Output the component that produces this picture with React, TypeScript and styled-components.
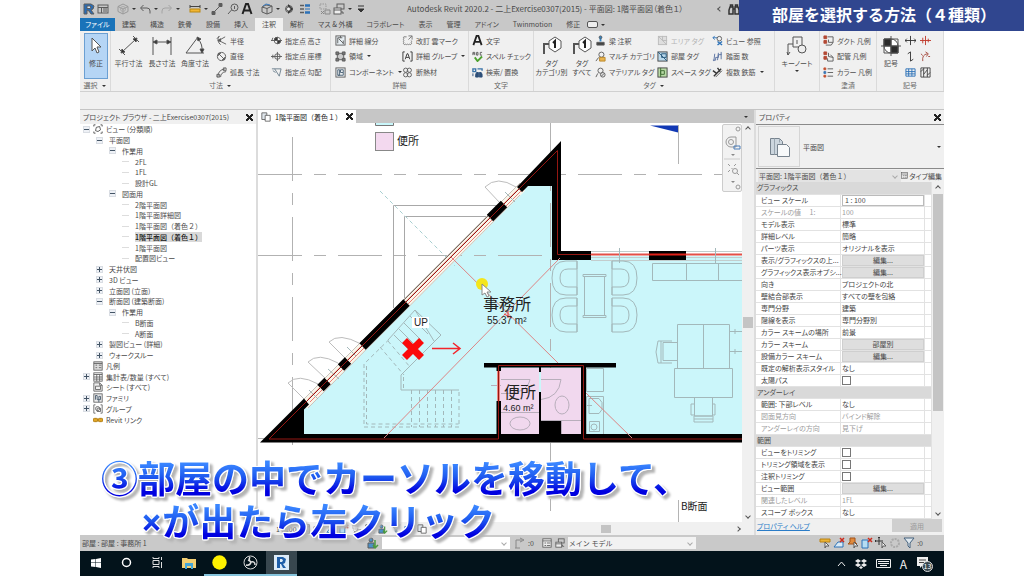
import React from "react";
import styled, { createGlobalStyle } from "styled-components";

const GlobalStyle = createGlobalStyle`
  * { box-sizing: border-box; }
  body { margin: 0; background: #fff; }
  body, button, input, select, table {
    font-family: "Noto Sans CJK JP", "Noto Sans", sans-serif;
    font-feature-settings: "palt";
    font-size: 7px;
    line-height: 10px;
    color: #4a4a4a;
  }
  button { border: 0; background: none; padding: 0; margin: 0; }
  svg { display: block; flex: none; }
`;

/* ---------- icons ---------- */

const g = "#5c5c5c";
const icons: Record<string, React.ReactNode> = {
  revit: <><path d="M1 1h7l3 2-1 3-2 1 3 4H8L6 8 4 7v4H1z" fill="#2a6cb4" /><path d="M4 3h3l1 1-1 1.500H4z" fill="#d8e8f6" /></>,
  window: <><rect x="1" y="2" width="10" height="8" /><path d="M1 4.500h10M4.500 4.500V10M6 6h4M6 8h4" /></>,
  cube: <><path d="M1 3.500 6 1l5 2.500v5L6 11 1 8.500zM1 3.500 6 6l5-2.500M6 6v5" stroke="#999" /><circle cx="6" cy="6" r="2.500" stroke="#aaa" /></>,
  undo: <path d="M4.500 2 1.500 5l3 3M2 5h6q3 0 3 3v2.500" />,
  redo: <path d="M7.500 2l3 3-3 3M10 5H4Q1 5 1 8v2.500" stroke="#a4a4a4" />,
  ruler: <><path d="M1 2v3M11 2v3M1 3.500h10" stroke="#444" /><rect x="1" y="6" width="10" height="3" fill="#f2b632" stroke="#b98712" /></>,
  line: <><path d="M2 10 10 2" /><path d="M1 8.500h3v3H1zM8 .5h3v3H8z" fill={g} /></>,
  tag1: <><circle cx="7.500" cy="4.500" r="3.500" /><path d="M4.500 7 1 11M7.500 3v3" /></>,
  letterA: <path d="M1.500 11 5 1h2l3.500 10M3 7.500h6" stroke="#222" strokeWidth="2" />,
  house: <><path d="M1 4 5 2l6 1v6l-5 2-5-2zM1 4l5 1.500L11 3M6 5.500V11" /><path d="m2 3 3-2 4 1" stroke="#3b7bbf" /></>,
  section: <><circle cx="6" cy="6" r="3.500" /><path d="M5 1l5 5-5 5" fill="#333" stroke="none" /><circle cx="5.500" cy="6" r="2" fill="#eee" /></>,
  lines: <><path d="M1 2.500h4M1 6h4M1 9.500h4" strokeWidth="1.500" /><path d="M6 2.500h5M6 9.500h5" stroke="#2d72b8" strokeWidth="2.500" /><path d="M6 6h5" stroke="#2d72b8" /></>,
  hidden: <><path d="M1 1h6v5H1z" strokeDasharray="1.500 1" stroke="#999" /><path d="M6 7h5v4H6z" stroke="#888" /><path d="m2 8 3 3M5 8l-3 3" stroke="#888" /></>,
  switchWin: <><rect x="4" y="1" width="7" height="5" /><rect x="1" y="5" width="7" height="6" fill="#eee" /><path d="M1 7h7M9 8v2h2" /></>,
  more: <path d="M3 3h6M3 6h6L6 9z" fill="#333" stroke="#333" />,
  binoc: <><path d="M2 4h3v7H1V7zM7 4h3l1 3v4H7zM5 6h2M2.500 4V2h2v2M7.500 4V2h2v2" stroke="#333" strokeWidth="1.500" /></>,
  radius: <><path d="M3 1.500A7 7 0 0 0 5 10.500" /><path d="M3 6 10 2M3 6l8 4M1 4l3-3" /><path d="m2 6 3-2v3z" fill={g} /></>,
  diameter: <><circle cx="6" cy="6" r="4.500" /><path d="m3 3 6 6" /><path d="M2.500 2.500h2.500l-2.500 2.500zM9.500 9.500H7L9.500 7z" fill={g} /></>,
  arc: <><path d="M2 11Q2 3 10 2M5 11q0-5 6-6" /><path d="M1 8h3v3H1zM8 1h3v3H8z" /></>,
  spotElev: <><circle cx="7" cy="6" r="3.500" fill="#fff" /><path d="M7 6V2.500A3.500 3.500 0 0 0 3.500 6zM7 6v3.500A3.500 3.500 0 0 0 10.500 6z" fill="#333" /><path d="M0 6h12M2 3l-1 3" /></>,
  spotCoord: <><circle cx="7" cy="6" r="3" /><path d="M0 6h12M7 1v10M2 4v4" /></>,
  spotSlope: <path d="M1 2h10L9 10M4 2l5 8M2 4l3 2" stroke="#6b7f8d" />,
  detail: <><rect x="1" y="1" width="10" height="10" fill="#e7eef3" /><path d="M3 9V3h5M4 4l5 5M6 1v2M9 6v4" /></>,
  region: <><rect x="2.500" y="2.500" width="7" height="7" fill="#ccc" /><path d="M1 1h3v3H1zM8 1h3v3H8zM1 8h3v3H1zM8 8h3v3H8z" fill="#777" /></>,
  component: <><rect x="1" y="1" width="10" height="10" fill="#eef1f3" /><path d="M3 3h2v6H3zM6 3h3v3H6zM3 9h6V6" stroke="#496075" /></>,
  cloud: <path d="M5 2H2q-1 1 0 2-1 1 0 2-1 1 0 2-1 1 0 2 1 1 2 0 1 1 2 0 1 1 2 0 1 1 2 0 1-1 0-2 1-1 0-2M7 1h4v4M11 1 7 5" stroke="#777" />,
  group: <><path d="M3 1H1v10h2M9 1h2v10H9" stroke="#333" /><path d="m3.500 9 2-6h1l2 6M4.500 7h3" stroke="#333" /></>,
  insul: <><circle cx="4" cy="3.500" r="2.300" /><circle cx="8" cy="3.500" r="2.300" /><circle cx="4" cy="8.500" r="2.300" /><circle cx="8" cy="8.500" r="2.300" /></>,
  spell: <><path d="M1 4.500v-3h2v3M1 3h2M5 1.500h1.500v3H5zM11 1.500H9v3h2" /><path d="m3 7 3 4 5-5" stroke="#4da12f" strokeWidth="2" /></>,
  find: <><path d="M1 2h3v3H1zM6 2h5v2" stroke="#3a73a8" strokeWidth="1.500" /><path d="M5 6h2v5H4V8zM8 6h2l1 2v3H8zM1 7v3" fill="#2d4f78" stroke="#2d4f78" /></>,
  beam: <><path d="M2 8h8v3H2z" fill="#444" /><path d="M6 7V3" stroke="#3286c8" strokeWidth="2" /><circle cx="6" cy="2.500" r="1.500" fill="#3286c8" /></>,
  multi: <><circle cx="7" cy="4" r="2.800" /><path d="M4 7 1 11" /><path d="M5 7h6v4H5z" fill="#e9b44f" stroke="#b98528" /></>,
  material: <><circle cx="6" cy="4" r="2.800" /><path d="M3 7 1 11" /><circle cx="8.500" cy="8.500" r="2.500" fill="#e8e8e8" /><path d="m7 10 3-3" /></>,
  area: <><rect x="1.500" y="1.500" width="9" height="9" stroke="#bbb" fill="#dedede" /><path d="m1.500 1.500 9 9M6 1v5h5" stroke="#bbb" /></>,
  room: <><rect x="1" y="1" width="10" height="10" fill="#bad9ec" stroke="#444" /><path d="m1 1 10 10M5 3h5v4H5z" stroke="#285a7d" /></>,
  space: <><rect x="1" y="1" width="10" height="10" fill="#b9dba6" stroke="#444" /><path d="M4 1v10M4 4h4v4H4z" stroke="#3c6a31" /></>,
  viewRef: <><path d="M1 3h5M3 1 1 3l2 2" stroke="#2d72b8" /><circle cx="8" cy="4" r="2.500" /><path d="m6 7 5 4M11 7l-5 4" stroke="#2d72b8" strokeWidth="1.500" /></>,
  tread: <path d="M1 10h3V7h3V4h3V1M2 11 3 3M6 10l1-8M10 9V3" stroke="#5870a0" />,
  rebar: <><path d="m2 10 8-8M1 4l4 3M6 1l3 4" stroke="#333" strokeWidth="1.500" /><path d="M4 11 11 4" /></>,
  duct: <><path d="M1 1h3v3H1zM1 6h3v3H1z" fill="#b34934" stroke="#b34934" /><path d="M5 2h6v6H6V5M3 11h6l2-3" /></>,
  pipe: <><path d="M1 1h3v3H1zM1 6h3v3H1z" fill="#b34934" stroke="#b34934" /><path d="M6 2v4l5 1v4H5V8M8 4l3 3" /></>,
  color: <><path d="M1 1h2v2H1zM1 9h2v2H1z" fill="#c4502f" stroke="#c4502f" /><path d="M1 5h2v2H1z" fill="#3b77b5" stroke="#3b77b5" /><path d="M5 2h6M5 6h6M5 10h6" /></>,
  spanH: <path d="M0 6h12M6 1v10M2 4 0 6l2 2M10 4l2 2-2 2" stroke="#333" />,
  spanR: <path d="M0 6h12M6 1v10M3 3v6M9 4v4" stroke="#c0392b" />,
  spanV: <path d="M6 1v10M3 3l3-2M6 11l3-2" stroke="#333" />,
  spanP: <path d="M3 11Q2 4 8 3M6 1l3 2-2 3M9 6h2M3 5 1 3" stroke="#a4463a" />,
  fabric: <path d="M1 2h10v8H1zM1 5h10M1 7.500h10M4 2v8M7.500 2v8" stroke="#2d72b8" />,
  fabric2: <path d="M1 1h10v10H1zM4 1v10M8 1v10M4 8l4-5M1 5l3-3M8 9l3-3" stroke="#444" />,
  views: <path d="M3 1H1v2M9 1h2v2M3 11H1V9M9 11h2V9M4 4l4-1 1 4-3 2-3-1z" stroke="#444" />,
  legend: <><rect x="1" y="1" width="10" height="10" fill="#ddd" /><path d="M1 3h10M3 5h2M3 8h2M7 5h3M7 8h3" /></>,
  schedule: <><rect x="1" y="1" width="10" height="10" fill="#fff" /><path d="M1 3h10M1 6h10M1 8.500h10M4.500 3v8M8 3v8" /></>,
  sheet: <><path d="M1 1h7l3 3v7H1z" fill="#eee" /><path d="M3 5h6v4H3zM8 1v3h3" /></>,
  family: <><rect x="1" y="1" width="10" height="10" fill="#eee" /><path d="M3 8V3h2v5h4V4H7v7" stroke="#3f5366" /></>,
  groups: <><path d="M3 1H1v10h2M9 1h2v10H9" /><circle cx="5.500" cy="5.500" r="2.500" /><path d="M5 5h4v4H5z" /></>,
  link: <><rect x="0" y="4" width="6" height="4" rx="2" fill="#e0a527" stroke="#a87406" /><rect x="6" y="4" width="6" height="4" rx="2" fill="#e0a527" stroke="#a87406" /></>,
  plan: <><path d="M1 1h6v8H1z" fill="#dfe6ec" /><path d="M5 4h6v7H5z" fill="#fff" /></>,
  selLink: <><path d="M1 2h10v3H1z" fill="#eab335" stroke="#ba8214" /><path d="m6 5 4 4H7l-1 2z" fill="#fff" /></>,
  selUnder: <><path d="M1 10 5 5h5v5z" stroke="#2d72b8" fill="#d9eaf6" /><path d="m7 1 4 4M11 1 7 5" stroke="#cc2b1d" strokeWidth="1.500" /></>,
  selPin: <><path d="M3 1h5v4l2 2H1l2-2z" fill="#e08a3c" stroke="#a45318" /><path d="m7 5 4 4H8l-1 2z" fill="#fff" /></>,
  selFace: <><path d="M1 3h6v8H1z" fill="#b6ddf3" stroke="#2d72b8" /><path d="m7 1 4 4M11 1 7 5" stroke="#cc2b1d" strokeWidth="1.500" /></>,
  drag: <><path d="M4 0v8M0 4h8M3 1l1-1 1 1M1 3 0 4l1 1" stroke="#333" /><path d="m7 5 4 4H8l-1 2z" fill="#fff" /></>,
  gear: <circle cx="6" cy="6" r="4" stroke="#aaa" strokeWidth="2" strokeDasharray="2 1" />,
  filter: <path d="M1 1h10L7 6v5L5 9V6z" stroke="#44617d" fill="#dfe8ef" />,
  people: <><circle cx="4" cy="3" r="2" fill="#4b8fc6" /><path d="M1 6h6v5H1z" fill="#4b8fc6" /><path d="M8 3v7M6 8l2 3 3-3" stroke="#4a9a40" strokeWidth="1.500" /></>,
  editReq: <path d="M3 11V3h6M2 11h5M7 1l4 2-4 2" stroke="#888" />,
  gridIcon: <><rect x="1" y="1" width="10" height="10" fill="#eee" /><path d="M1 3.500h10M3 6h2M6 6h4M3 9h2M6 9h4" /></>,
};

function Icon({ name, size = 12 }: { name: string; size?: number }) {
  return (
    <svg width={size} height={size} viewBox="0 0 12 12" fill="none" stroke={g} strokeWidth="1" aria-hidden="true">
      {icons[name]}
    </svg>
  );
}

/* ---------- shell ---------- */

const Page = styled.div`
  position: relative;
  min-height: 100vh;
  padding: 0 80px;
  display: flex;
`;
const Window = styled.div`
  flex: 1;
  min-width: 0;
  display: flex;
  flex-direction: column;
  background: #f0f0f0;
  white-space: nowrap;
`;
const Banner = styled.h1`
  position: absolute;
  top: 0;
  right: 0;
  width: 285px;
  height: 31px;
  margin: 0;
  padding-left: 33px;
  background: #30468f;
  color: #fff;
  font-size: 16px;
  font-weight: 700;
  line-height: 29px;
  font-feature-settings: normal;
  white-space: nowrap;
`;
const TitleBar = styled.header`
  height: 18px;
  display: flex;
  align-items: center;
  background: #c8c8c8;
  padding-left: 3px;
`;
const QuickTools = styled.div`
  display: flex;
  align-items: center;
  gap: 2px;
`;
const Gap = styled.span<{ $w: number }>`
  width: ${(p) => p.$w}px;
`;
const ToolButton = styled.button`
  width: 12px;
  height: 14px;
  display: flex;
  align-items: center;
  justify-content: center;
`;
const Dot = styled.span`
  width: 6px;
  display: flex;
  justify-content: center;
  &::before {
    content: "";
    border: 2px solid transparent;
    border-top-color: #333;
    border-bottom: 0;
  }
`;
const WindowTitle = styled.span`
  margin-left: 40px;
  font-size: 8px;
  flex: 1;
`;
const TitleSearch = styled.span`
  display: flex;
  align-items: center;
  gap: 6px;
  margin-right: 204px;
`;
const Tabs = styled.nav`
  height: 13px;
  display: flex;
  background: #c8c8c8;
`;
const Tab = styled.button<{ $kind?: "file" | "active" }>`
  padding: 0 7px;
  line-height: 13px;
  ${(p) => p.$kind === "file" && "width: 35px; padding: 0; background: #1a73b9; color: #fff;"}
  ${(p) => p.$kind === "active" && "background: #f0f0f0;"}
`;
const RibbonToggle = styled.button`
  display: flex;
  align-items: center;
  gap: 2px;
  &::before {
    content: "";
    width: 9px;
    height: 5px;
    border: 1px solid #555;
    border-radius: 2px;
    background: #eee;
  }
`;

/* ---------- ribbon ---------- */

const Ribbon = styled.div`
  height: 61px;
  display: grid;
  grid-template-columns: 31fr 220fr 138fr 65fr 241fr 45fr 57fr 67fr;
  border-bottom: 1px solid #d0d0d0;
`;
const Panel = styled.section`
  border-right: 1px solid #dadada;
  display: flex;
  flex-direction: column;
  min-width: 0;
`;
const PanelBody = styled.div<{ $cols: string }>`
  height: 49px;
  padding-top: 2px;
  display: grid;
  grid-template-columns: ${(p) => p.$cols};
`;
const PanelName = styled.div`
  display: flex;
  justify-content: center;
  align-items: center;
  gap: 3px;
  color: #666;
  line-height: 11px;
`;
const BigButton = styled.button<{ $on?: boolean }>`
  display: flex;
  flex-direction: column;
  align-items: center;
  gap: 2px;
  padding-top: 2px;
  line-height: 9px;
  ${(p) => p.$on && "margin: 0 2px 1px 4px; background: #b5d5f5; border: 1px solid #6b9fd2; gap: 3px; padding-top: 0;"}
`;
const Stack = styled.div`
  display: grid;
  grid-template-rows: repeat(3, 1fr);
  justify-items: start;
`;
const Command = styled.button<{ $off?: boolean }>`
  display: flex;
  align-items: center;
  gap: 3px;
  word-spacing: normal;
  color: ${(p) => (p.$off ? "#b5b5b5" : "#4f4f4f")};
`;

type Cmd = [icon: string, label: string, menu?: boolean];

function Commands({ items }: { items: Cmd[] }) {
  return (
    <Stack>
      {items.map(([icon, label, menu]) => (
        <Command key={label} $off={icon === "area"}>
          <Icon name={icon} size={11} />
          {label}
          {menu && <Dot />}
        </Command>
      ))}
    </Stack>
  );
}

const BigDim = ({ kind }: { kind: "aligned" | "linear" | "angular" | "tag" | "keynote" | "symbol" | "cursor" }) => (
  <svg width="22" height="22" viewBox="0 0 22 22" fill="none" stroke="#555" aria-hidden="true">
    {kind === "aligned" && <><path d="M4 17 18 4M1 14l6 6M15 1l6 6" /><path d="m3 18 1-4 3 3zM19 3l-4 1 3 3z" fill="#333" /></>}
    {kind === "linear" && <><path d="M2 2v18M20 2v18M2 7h18" /><path d="m2 7 4-2v4zM20 7l-4-2v4z" fill="#333" /></>}
    {kind === "angular" && <><path d="M14 2 2 18h18M14 4q5 5 4 14" /><path d="m13 2 4 2-3 2zM16 14h4l-2 4z" fill="#333" /></>}
    {kind === "tag" && <><path d="M3 19V9h5" strokeWidth="2" /><path d="m8 6 6-4 6 4v7l-6 4-6-4z" fill="#fff" /><path d="m12 8 2-2v7" stroke="#222" strokeWidth="2" /></>}
    {kind === "keynote" && <><path d="M2 20V9h5" /><path d="M7 2h9v10H7zM11 5v4" /><circle cx="16" cy="14" r="4" fill="#eee" /><path d="m1 17 1 3 2-3" /></>}
    {kind === "symbol" && <><circle cx="11" cy="11" r="7" fill="#fff" /><path d="M4 4h7v7H4zM11 11h7v7h-7z" fill="#2b2b2b" stroke="#2b2b2b" /><path d="M4 4h14v14H4zM1 11h20M11 1v20" /></>}
    {kind === "cursor" && <path d="M7 4v13l3-3 2 5 2-1-2-5h4z" fill="#fff" />}
  </svg>
);

function RibbonBar() {
  return (
    <Ribbon>
      <Panel>
        <PanelBody $cols="1fr">
          <BigButton $on><BigDim kind="cursor" />修正</BigButton>
        </PanelBody>
        <PanelName>選択<Dot /></PanelName>
      </Panel>
      <Panel>
        <PanelBody $cols="35px 32px 34px 4px 55px 1fr">
          <BigButton><BigDim kind="aligned" />平行寸法</BigButton>
          <BigButton><BigDim kind="linear" />長さ寸法</BigButton>
          <BigButton><BigDim kind="angular" />角度寸法</BigButton>
          <span />
          <Commands items={[["radius", "半径"], ["diameter", "直径"], ["arc", "弧長 寸法"]]} />
          <Commands items={[["spotElev", "指定点 高さ"], ["spotCoord", "指定点 座標"], ["spotSlope", "指定点 勾配"]]} />
        </PanelBody>
        <PanelName>寸法<Dot /></PanelName>
      </Panel>
      <Panel>
        <PanelBody $cols="4px 67px 1fr">
          <span />
          <Commands items={[["detail", "詳細 線分"], ["region", "領域", true], ["component", "コンポーネント", true]]} />
          <Commands items={[["cloud", "改訂 雲マーク"], ["group", "詳細 グループ", true], ["insul", "断熱材"]]} />
        </PanelBody>
        <PanelName>詳細</PanelName>
      </Panel>
      <Panel>
        <PanelBody $cols="3px 1fr">
          <span />
          <Commands items={[["letterA", "文字"], ["spell", "スペル チェック"], ["find", "検索/ 置換"]]} />
        </PanelBody>
        <PanelName>文字</PanelName>
      </Panel>
      <Panel>
        <PanelBody $cols="35px 26px 62px 55px 1fr">
          <BigButton><BigDim kind="tag" />タグ<br />カテゴリ別</BigButton>
          <BigButton><BigDim kind="tag" />タグ<br />すべて</BigButton>
          <Commands items={[["beam", "梁 注釈"], ["multi", "マルチ カテゴリ"], ["material", "マテリアル タグ"]]} />
          <Commands items={[["area", "エリア タグ"], ["room", "部屋 タグ"], ["space", "スペース タグ"]]} />
          <Commands items={[["viewRef", "ビュー 参照"], ["tread", "踏面 数"], ["rebar", "複数 鉄筋", true]]} />
        </PanelBody>
        <PanelName>タグ<Dot /></PanelName>
      </Panel>
      <Panel>
        <PanelBody $cols="1fr">
          <BigButton><BigDim kind="keynote" />キーノート<Dot /></BigButton>
        </PanelBody>
      </Panel>
      <Panel>
        <PanelBody $cols="3px 1fr">
          <span />
          <Commands items={[["duct", "ダクト 凡例"], ["pipe", "配管 凡例"], ["color", "カラー 凡例"]]} />
        </PanelBody>
        <PanelName>塗潰</PanelName>
      </Panel>
      <Panel>
        <PanelBody $cols="28px 15px 1fr">
          <BigButton><BigDim kind="symbol" />記号</BigButton>
          <Stack>
            {["spanH", "spanV", "fabric"].map((n) => <Command key={n} aria-label={n}><Icon name={n} size={11} /></Command>)}
          </Stack>
          <Stack>
            {["spanR", "spanP", "fabric2"].map((n) => <Command key={n} aria-label={n}><Icon name={n} size={11} /></Command>)}
          </Stack>
        </PanelBody>
        <PanelName>記号</PanelName>
      </Panel>
    </Ribbon>
  );
}

/* ---------- workspace ---------- */

const OptionsBar = styled.div`
  height: 18px;
  border-bottom: 1px solid #c4c4c4;
`;
const Workspace = styled.main`
  flex: 1;
  display: grid;
  grid-template-columns: 176px minmax(0, 1fr) 188px;
  column-gap: 2px;
  background: #dcdcdc;
`;
const Dock = styled.section`
  display: flex;
  flex-direction: column;
  min-width: 0;
  background: #fff;
`;
const DockTitle = styled.div`
  height: 14px;
  padding: 0 3px;
  display: flex;
  align-items: center;
  justify-content: space-between;
  background: #f0f0f0;
`;
const Close = styled.button`
  width: 7px;
  height: 7px;
  background:
    linear-gradient(45deg, transparent 40%, #222 40%, #222 60%, transparent 60%),
    linear-gradient(-45deg, transparent 40%, #222 40%, #222 60%, transparent 60%);
`;
const Tree = styled.ul`
  list-style: none;
  margin: 0;
  padding: 0;
  height: 301px;
  display: grid;
  grid-template-rows: repeat(28, 1fr);
`;
const Node = styled.li<{ $level: number }>`
  display: flex;
  align-items: center;
  gap: ${(p) => (p.$level === 0 ? 3 : 6)}px;
  padding-left: ${(p) => 3 + p.$level * 13}px;
`;
const Expander = styled.span<{ $state: string }>`
  width: 7px;
  height: 7px;
  display: grid;
  place-items: center;
  ${(p) => p.$state !== "" && "border: 1px solid #d9dde3; background: #eef1f6;"}
  ${(p) => p.$state === "leaf" && "border: 0; background: linear-gradient(#ddd, #ddd) 0 3px / 7px 1px no-repeat;"}
  &::before {
    content: "";
    width: 5px;
    height: 5px;
    background: ${(p) =>
      p.$state === "-"
        ? "linear-gradient(#456, #456) 0 2px / 5px 1px no-repeat"
        : p.$state === "+"
        ? "linear-gradient(#456, #456) 0 2px / 5px 1px no-repeat, linear-gradient(#456, #456) 2px 0 / 1px 5px no-repeat"
        : "none"};
  }
`;
const NodeText = styled.span<{ $on?: boolean; $wide?: boolean }>`
  ${(p) => p.$wide && "font-feature-settings: normal;"}
  ${(p) => p.$on && "background: #d9d9d9; font-weight: 500; color: #111;"}
`;

type TreeNode = [level: number, state: string, label: string, icon?: string];
const tree: TreeNode[] = [
  [0, "-", "ビュー (分類順)", "views"], [1, "-", "平面図"], [2, "-", "作業用"],
  [3, "leaf", "2FL"], [3, "leaf", "1FL"], [3, "leaf", "設計GL"], [2, "-", "図面用"],
  [3, "leaf", "2階平面図"], [3, "leaf", "1階平面詳細図"], [3, "leaf", "1階平面図（着色２）"],
  [3, "leaf", "1階平面図（着色１）"], [3, "leaf", "1階平面図"], [3, "leaf", "配置図ビュー"],
  [1, "+", "天井伏図"], [1, "+", "3D ビュー"], [1, "+", "立面図 (立面)"], [1, "-", "断面図 (建築断面)"],
  [2, "-", "作業用"], [3, "leaf", "B断面"], [3, "leaf", "A断面"], [1, "+", "製図ビュー (詳細)"],
  [1, "+", "ウォークスルー"], [0, "", "凡例", "legend"], [0, "+", "集計表/数量 (すべて)", "schedule"],
  [0, "", "シート (すべて)", "sheet"], [0, "+", "ファミリ", "family"], [0, "+", "グループ", "groups"],
  [0, "", "Revit リンク", "link"],
];

const ViewTabs = styled.div`
  height: 13px;
  display: flex;
  justify-content: space-between;
  align-items: center;
  padding-right: 5px;
  background: #c6c6c6;
`;
const ViewTab = styled.div`
  height: 13px;
  display: flex;
  align-items: center;
  gap: 4px;
  padding: 0 3px;
  background: #fff;
  font-feature-settings: normal;
  color: #222;
`;
const CanvasRow = styled.div`
  flex: 1;
  position: relative;
  display: grid;
  grid-template-columns: minmax(0, 1fr) 12px;
`;
const VScroll = styled.div`
  display: flex;
  flex-direction: column;
  align-items: center;
  justify-content: space-between;
  padding: 4px 0;
  background: #f0f0f0;
`;
const Thumb = styled.span<{ $w: number; $h: number }>`
  width: ${(p) => p.$w}px;
  height: ${(p) => p.$h}px;
  background: #c4c4c4;
`;
const Chevron = styled.span<{ $turn: number }>`
  width: 4px;
  height: 4px;
  border: solid #555;
  border-width: 1px 1px 0 0;
  transform: rotate(${(p) => p.$turn}deg);
`;
const NavBar = styled.div`
  position: absolute;
  top: 1px;
  right: 12px;
  width: 20px;
  height: 68px;
  border: 1px solid #ccc;
  border-radius: 2px;
  background: #f2f2f2;
  display: flex;
  flex-direction: column;
  align-items: center;
  justify-content: space-around;
`;
const ViewControls = styled.div`
  height: 13px;
  display: flex;
  align-items: center;
  gap: 3px;
  padding: 0 14px 0 18px;
  background: #f0f0f0;
`;
const HTrack = styled.span`
  flex: 1;
  height: 8px;
  display: flex;
  justify-content: space-between;
  align-items: center;
  padding-left: 171px;
`;

const chair = "M0 0H-11Q-25 0-25 17T-11 34H0V26H-9Q-17 26-17 17T-9 8H0zM0 0V34";

const Plan = () => (
  <svg width="100%" height="100%" viewBox="258 123 484 399" preserveAspectRatio="xMidYMid slice" fill="none" fontFamily="'Noto Sans CJK JP', sans-serif">
    <rect x="258" y="123" width="484" height="399" fill="#fff" />
    <path d="M375.500 123v2.500h18V123" fill="#c9f7fb" stroke="#777" />
    <rect x="375.500" y="132.500" width="18" height="18" fill="#f3d9ef" stroke="#888" />
    <path d="M275 436 561 150v106h181v182H275z" fill="#cbf6fa" />

    <g stroke="#b2b2b2" strokeDasharray="44 12 12 12">
      <path d="M258 174.500h484M258 255.500h300M292.500 137v315M550.500 123v390M258 438.500h12" />
    </g>
    <path d="M650 125.500h28v7z" fill="#1138b4" />
    <path d="M678.500 125v39M678.500 500v22" stroke="#b4b4b4" />

    <g stroke="#a8a8a8">
      <path d="M393.500 308V205.500H498M404.500 299V216.500H488" />
      <path d="M304 399 288 383Q298 373 318 384M325 378 308 362Q318 352 338 363M345 358 329 342Q339 332 361 344M500 203 485 187Q497 175 516 187" stroke="#bdbdbd" />
      <path d="m380 191 75 75" stroke="#a8cfd0" strokeDasharray="4 3" />
    </g>

    <path d="M304 405.500 522 187.500" stroke="#f8f6ea" strokeWidth="9" />
    <path d="m404 300 84-84" stroke="#7c6c64" />
    <path d="M303 400 520 183M308 408l212-213" stroke="#c9c2bc" />
    <path d="M308 399.500 519 188.500M310 402 521 191" stroke="#ea7a76" />
    <path d="M591 251.500h151M591 260.500h151M591 257.500h151" stroke="#c3cdcd" />
    <path d="M591 254.500h151" stroke="#e34f47" strokeWidth="2" />

    <g stroke="#a3b8ba">
      <path d="M619.500 248v15M715.500 248v15M652.500 263.500H742M652.500 263.500v17H742M686.500 263.500v17M718.500 263.500v17" />
      <path d="M584.500 276.500v39M604.500 276.500v39M583 274.500h23v2h-23zM583 315.500h23v2h-23z" />
      <path d={chair} transform="translate(577 261)" />
      <path d={chair} transform="translate(577 298)" />
      <path d={chair} transform="translate(612 261) scale(-1 1)" />
      <path d={chair} transform="translate(612 298) scale(-1 1)" />
      <path d="M677.500 324.500h52v44h-52zM703.500 324.500v44M674.500 368.500h58v29h-58z" />
      <path d="M677 342.500h-14v18h14M661 341v22h-3l-2-11 2-11zM661 341h11M661 363h11M742 331.500h-12M742 351.500h-12M735 329v5M735 349v5" />
      <path d="M694.500 397v19h18v-19M694 416h19v6h-19zM694 419h19M694 404h-3v11h3M713 404h2v11h-2" />
      <path d="M586.500 368.500h17v23h-17zM586.500 396.500h17v38h-17zM589 398.500h10l3 4v7l-3 4h-10zM589.500 421.500h10v10h-10zM585 405.500h7" />
      <circle cx="594" cy="427" r="3" />
      <path d="M394 335l16 16M399 329l16 16M404 323l17 17M410 316l18 18M415 310l19 31M388 340 415 310l26 25-40 40v15h58" />
      <path d="M389 339.500 364 364v63h95V390M366.500 366v58h92M403.500 377v11M380 347l24 28M388 341l22 26M411.500 390v37M419.500 390v37M427.500 390v37M435.500 390v37M443.500 390v37M451.500 390v37" strokeDasharray="4 3" />
      <path d="m347 347 9 9M309 390l9 9M328 369l11 10M505 192l10 10" />
    </g>

    <path d="M500 368h39v66h-39zM541 368h40v66h-40z" fill="#f1d8ee" />
    <g stroke="#b8aebb">
      <path d="M501 412.500h38M541 420.500h40M501 379.500h29q-3 15-29 14M541 379.500h20q-2 18-20 20M561.500 420v14M491 385.500h10" />
      <ellipse cx="520" cy="423.500" rx="10" ry="6.500" /><ellipse cx="562" cy="405" rx="7" ry="9" />
    </g>

    <g fill="#000">
      <path d="M260 442.500 304 398.500l5 6-5 5V434H742v8.500z" />
      <path d="M517 187 561 141v110h30v9h-39v-74h-24l-6 6z" />
      <path d="M649 251h37v9h-37zM484 363h132v4.500H484zM496.500 367h4.500v4h-4.500zM496.500 401h4.500v34h-4.500zM581 367h5v68h-5zM539 367h2v5h-2zM539 392h2v42h-2zM540 421h21v14h-21z" />
    </g>
    <g stroke="#000" strokeWidth="9">
      <path d="m362.500 346.500 44-44M320.500 388l7-7M341 367.500l7-7M490 218l14-14" />
    </g>
    <path d="m498.500 371v30" stroke="#ee8883" strokeWidth="3" />
    <path d="M269 439H498.500V365.500H583.500V439H742M269 439 557.500 150.500V254.500H591" stroke="#951712" strokeWidth="1" />
    <path d="M649 254.500h37" stroke="#dd2018" strokeWidth="2" />
    <path d="m451 257 107 106M586 393l46 45M560 258 384 438" stroke="#dc8585" />
    <path d="m504 314 8 4M508 311v7" stroke="#e33" />

    <rect x="412" y="317" width="17" height="11" fill="#fff" />
    <g fill="#222" style={{ fontFeatureSettings: "normal" }}>
      <text x="397" y="145" fontSize="11">便所</text>
      <text x="483" y="310" fontSize="16">事務所</text>
      <text x="504" y="398" fontSize="16">便所</text>
      <text x="681" y="510" fontSize="10">B断面</text>
    </g>
    <g fill="#222" fontFamily="'Liberation Sans', sans-serif">
      <text x="414" y="326" fontSize="10">UP</text>
      <text x="487" y="324" fontSize="10">55.37 m²</text>
      <text x="503" y="411" fontSize="9">4.60 m²</text>
    </g>
    <path d="m404.500 340.500 17 17M421.500 340.500l-17 17" stroke="#fb0a0a" strokeWidth="7" />
    <path d="M432 348.500h27M453 343l7 5.500-7 5.500" stroke="#f3252b" strokeWidth="1.500" />
    <circle cx="482" cy="284" r="6" fill="#f4e61c" />
    <path d="M482 284v11l3-2 2 4 2-1-2-4h4z" fill="#fff" stroke="#888" />
  </svg>
);

/* ---------- properties ---------- */

const TypeRow = styled.div`
  height: 45px;
  display: flex;
  align-items: center;
  gap: 3px;
  padding: 0 2px;
  background: #f0f0f0;
  border: solid #8a8a8a;
  border-width: 1px 0;
  & > span:nth-child(2) { flex: 1; }
`;
const TypePreview = styled.span`
  width: 42px;
  height: 41px;
  display: grid;
  place-items: center;
  border: 1px solid #d5d5d5;
`;
const InstanceRow = styled.div`
  height: 13px;
  display: flex;
  align-items: center;
  padding: 0 2px;
  background: #f0f0f0;
`;
const PlainSelect = styled.select<{ $bg: string }>`
  flex: 1;
  min-width: 0;
  height: 12px;
  padding: 0 8px 0 1px;
  border: 0;
  border-radius: 0;
  appearance: none;
  background: ${(p) => p.$bg};
  font-feature-settings: normal;
`;
const SelectBox = styled.label<{ $w?: number }>`
  display: flex;
  align-items: center;
  min-width: 0;
  flex: ${(p) => (p.$w ? `0 0 ${p.$w}px` : "1")};
  & > ${Chevron} { margin-left: -8px; margin-right: 4px; border-color: #aaa; }
`;
const TypeEdit = styled.button`
  display: flex;
  align-items: center;
  gap: 1px;
`;
const PropBody = styled.div`
  display: grid;
  grid-template-columns: minmax(0, 1fr) 12px;
`;
const PropTable = styled.table`
  width: 100%;
  border-collapse: collapse;
  table-layout: fixed;
  tr { height: 12px; }
  th, td { padding: 0; text-align: left; font-weight: 400; border: solid #e2e2e2; border-width: 0 1px 1px 0; line-height: 11px; }
`;
const GroupHead = styled.th`
  && { background: #d9d9d9; padding-left: 1px; }
`;
const Name = styled.th<{ $dim?: boolean }>`
  && { padding-left: 5px; color: ${(p) => (p.$dim ? "#9c9c9c" : "#444")}; }
`;
const Value = styled.td<{ $dim?: boolean }>`
  && { padding-left: 1px; color: ${(p) => (p.$dim ? "#9c9c9c" : "#444")}; }
`;
const CellInput = styled.input`
  display: block;
  width: 82px;
  height: 11px;
  padding: 0 2px;
  border: 1px solid #bbb;
`;
const CellButton = styled.button`
  display: block;
  width: 82px;
  height: 11px;
  background: #dedede;
  border: 1px solid #cfcfcf;
  line-height: 9px;
`;
const Check = styled.input`
  appearance: none;
  display: block;
  width: 9px;
  height: 9px;
  margin: 1px 0;
  border: 1px solid #777;
  background: #fff;
`;
const PropScroll = styled.div`
  display: flex;
  flex-direction: column;
  align-items: center;
  gap: 4px;
  padding: 4px 0;
  background: #f0f0f0;
  & > :last-child { margin-top: auto; }
`;
const PropFoot = styled.div`
  flex: 1;
  display: flex;
  align-items: center;
  justify-content: space-between;
  padding: 0 2px 2px 1px;
  background: #f0f0f0;
  a { color: #2a7cc7; }
  button { width: 50px; height: 13px; background: #cfcfcf; color: #9a9a9a; }
`;

type Prop = [name: string, value?: string, kind?: "input" | "dim" | "button" | "check"];
const props: Prop[] = [
  ["グラフィックス"], ["ビュー スケール", "1 : 100", "input"], ["スケールの値　 1:", "100", "dim"],
  ["モデル表示", "標準"], ["詳細レベル", "簡略"], ["パーツ表示", "オリジナルを表示"],
  ["表示/グラフィックスの上...", "編集...", "button"], ["グラフィックス表示オプシ...", "編集...", "button"],
  ["向き", "プロジェクトの北"], ["壁結合部表示", "すべての壁を包絡"], ["専門分野", "建築"],
  ["隠線を表示", "専門分野別"], ["カラー スキームの場所", "前景"], ["カラー スキーム", "部屋別", "button"],
  ["設備カラー スキーム", "編集...", "button"], ["既定の解析表示スタイル", "なし"], ["太陽パス", "", "check"],
  ["アンダーレイ"], ["範囲: 下部レベル", "なし"], ["図面見方向", "バインド解除", "dim"],
  ["アンダーレイの方向", "見下げ", "dim"], ["範囲"], ["ビューをトリミング", "", "check"],
  ["トリミング領域を表示", "", "check"], ["注釈トリミング", "", "check"], ["ビュー範囲", "編集...", "button"],
  ["関連したレベル", "1FL", "dim"], ["スコープ ボックス", "なし"],
];

function Properties() {
  return (
    <Dock>
      <DockTitle>プロパティ<Close aria-label="閉じる" /></DockTitle>
      <TypeRow>
        <TypePreview>
          <svg width="24" height="24" viewBox="0 0 24 24" stroke="#77838e">
            <path d="M3.500 3.500h9l3 3v13h-12z" fill="#ccd6de" /><path d="M7.500 3.500v16M12.500 3.500v4" stroke="#9aa6b0" /><path d="M10.500 9.500h9l3 3v9h-12z" fill="#f7f9fa" />
          </svg>
        </TypePreview>
        <span>平面図</span>
        <Dot />
      </TypeRow>
      <InstanceRow>
        <SelectBox>
          <PlainSelect $bg="#e3e3e3" aria-label="インスタンス"><option>平面図: 1階平面図（着色１）</option></PlainSelect>
          <Chevron $turn={135} />
        </SelectBox>
        <TypeEdit><Icon name="gridIcon" size={7} />タイプ編集</TypeEdit>
      </InstanceRow>
      <PropBody>
        <PropTable>
          <colgroup><col /><col style={{ width: 84 }} /><col style={{ width: 7 }} /></colgroup>
          <tbody>
            {props.map(([name, value, kind]) =>
              value === undefined ? (
                <tr key={name}><GroupHead colSpan={3}>{name}</GroupHead></tr>
              ) : (
                <tr key={name}>
                  <Name scope="row" $dim={kind === "dim"}>{name}</Name>
                  <Value $dim={kind === "dim"}>
                    {kind === "input" ? <CellInput aria-label={name} defaultValue={value} />
                      : kind === "button" ? <CellButton>{value}</CellButton>
                      : kind === "check" ? <Check type="checkbox" aria-label={name} />
                      : value}
                  </Value>
                  <td />
                </tr>
              )
            )}
          </tbody>
        </PropTable>
        <PropScroll><Chevron $turn={-45} /><Thumb $w={10} $h={217} /><Chevron $turn={135} /></PropScroll>
      </PropBody>
      <PropFoot><a href="#help">プロパティ ヘルプ</a><button>適用</button></PropFoot>
    </Dock>
  );
}

/* ---------- bottom bars ---------- */

const StatusBar = styled.footer`
  height: 16px;
  display: flex;
  align-items: center;
  gap: 3px;
  padding: 0 21px 0 2px;
  background: #c9c9c9;
`;
const StatusText = styled.span`
  flex: 0 0 282px;
`;
const StatusTools = styled.span`
  display: flex;
  gap: 2px;
  align-items: center;
  margin-left: auto;
`;
const Taskbar = styled.div`
  height: 25px;
  display: flex;
  align-items: stretch;
  background: #03131b;
`;
const TaskItem = styled.button<{ $open?: boolean; $front?: boolean }>`
  width: 31px;
  display: grid;
  place-items: center;
  background: ${(p) => (p.$front ? "#38474f" : "transparent")};
  border-bottom: 2px solid ${(p) => (p.$open ? "#86c4dc" : "transparent")};
`;
const Tray = styled.div`
  margin-left: auto;
  margin-right: 11px;
  display: flex;
  align-items: center;
  gap: 9px;
  color: #eee;
  font-size: 12px;
`;
const Caption = styled.p`
  position: absolute;
  left: 101px;
  top: 457px;
  margin: 0;
  display: flex;
  flex-direction: column;
  align-items: flex-start;
  white-space: nowrap;
  font-family: "Noto Sans", "Noto Sans CJK JP", sans-serif;
  font-size: 37px;
  font-weight: 700;
  line-height: 43px;
  font-feature-settings: normal;
  filter: drop-shadow(1px 0 0 #fff) drop-shadow(-1px 0 0 #fff) drop-shadow(0 1px 0 #fff) drop-shadow(0 -1px 0 #fff) drop-shadow(3px 3px 1px #b4b4b4);
`;
const CaptionLine = styled.span<{ $indent?: boolean }>`
  margin-left: ${(p) => (p.$indent ? 40 : 0)}px;
  background: linear-gradient(#3a86ff 15%, #1f5cf0 45%, #0000e0 80%);
  background-clip: text;
  -webkit-background-clip: text;
  color: transparent;
`;

const quick: (string | number)[] = [
  "revit", "window", 4, "cube", "▾", "undo", "▾", "redo", "▾", 4, "ruler", "▾", "line", 0, "tag1", "letterA", 4,
  "house", "▾", "section", 0, "lines", 4, "hidden", "switchWin", "▾", "more",
];
const tabNames = ["ファイル", "建築", "構造", "鉄骨", "設備", "挿入", "注釈", "解析", "マス & 外構", "コラボレート", "表示", "管理", "アドイン", "Twinmotion", "修正"];

export default function App() {
  return (
    <Page>
      <GlobalStyle />
      <Window>
        <TitleBar>
          <QuickTools>
            {quick.map((q, i) =>
              typeof q === "number" ? <Gap key={i} $w={q} /> : q === "▾" ? <Dot key={i} /> :
              <ToolButton key={i} aria-label={q}><Icon name={q} /></ToolButton>
            )}
          </QuickTools>
          <WindowTitle>Autodesk Revit 2020.2 - 二上Exercise0307(2015) - 平面図: 1階平面図（着色１）</WindowTitle>
          <TitleSearch><Chevron $turn={-135} /><Icon name="binoc" /></TitleSearch>
        </TitleBar>
        <Tabs>
          {tabNames.map((t, i) => (
            <Tab key={t} $kind={i === 0 ? "file" : t === "注釈" ? "active" : undefined}>{t}</Tab>
          ))}
          <RibbonToggle aria-label="リボン表示"><Dot /></RibbonToggle>
        </Tabs>
        <RibbonBar />
        <OptionsBar />
        <Workspace>
          <Dock>
            <DockTitle>プロジェクト ブラウザ - 二上Exercise0307(2015)<Close aria-label="閉じる" /></DockTitle>
            <Tree>
              {tree.map(([level, state, label, icon], i) => (
                <Node key={i} $level={level}>
                  <Expander $state={state} />
                  {icon && <Icon name={icon} size={10} />}
                  <NodeText $on={label === "1階平面図（着色１）"} $wide={label.includes("（")}>{label}</NodeText>
                </Node>
              ))}
            </Tree>
          </Dock>
          <Dock>
            <ViewTabs>
              <ViewTab><Icon name="plan" size={10} />1階平面図（着色１）<Close aria-label="閉じる" /></ViewTab>
              <Dot />
            </ViewTabs>
            <CanvasRow>
              <Plan />
              <VScroll><Chevron $turn={-45} /><Thumb $w={10} $h={11} /><Chevron $turn={135} /></VScroll>
              <NavBar>
                <svg width="18" height="66" viewBox="0 0 18 66" fill="none" stroke="#999">
                  <circle cx="15" cy="4" r="2" /><circle cx="15" cy="62" r="2" />
                  <path d="M13 22V12H8a5 5 0 1 0 0 10h5" /><circle cx="8" cy="17" r="2.500" /><path d="M11 21h6v3h-6z" stroke="#4a7cb8" />
                  <path d="M8 29h4l-2 2zM8 56h4l-2 2z" fill="#888" stroke="none" /><path d="M1 34h16" stroke="#ccc" />
                  <path d="m5 39 2 2M13 39l-2 2M5 47l2-2M9 43v1" /><circle cx="12" cy="46" r="2.500" /><path d="m14 48 2 2" />
                </svg>
              </NavBar>
            </CanvasRow>
            <ViewControls>
              <span>1 : 100</span>
              {["gridIcon", "cube", "selUnder", "selFace", "hidden", "views", "people", "filter", "selFace", "plan"].map((n, i) => <Icon key={i} name={n} size={10} />)}
              <HTrack><Thumb $w={10} $h={8} /><Chevron $turn={45} /></HTrack>
            </ViewControls>
          </Dock>
          <Properties />
        </Workspace>
        <StatusBar>
          <StatusText>部屋 : 部屋 : 事務所 1</StatusText>
          <Icon name="people" />
          <SelectBox $w={128}><PlainSelect $bg="#fff" aria-label="ワークセット"><option> </option></PlainSelect><Chevron $turn={135} /></SelectBox>
          <Icon name="editReq" /><span>:0</span><Gap $w={2} />
          <Icon name="gridIcon" size={10} /><Icon name="switchWin" size={10} />
          <SelectBox $w={128}><PlainSelect $bg="#f2f2f2" aria-label="デザイン オプション"><option>メイン モデル</option></PlainSelect><Chevron $turn={135} /></SelectBox>
          <StatusTools>
            {["selLink", "selUnder", "selPin", "selFace", "drag", "gear", "filter"].map((n) => <Icon key={n} name={n} />)}:0
          </StatusTools>
        </StatusBar>
        <Taskbar>
          <TaskItem aria-label="スタート"><svg width="10" height="10" viewBox="0 0 10 10" fill="#fff"><path d="M0 1.500 4.500 1v3.500H0zM5 1l5-1v4.500H5zM0 5h4.500v4L0 8.500zM5 5h5v5L5 9z" /></svg></TaskItem>
          <TaskItem aria-label="検索"><svg width="11" height="11" viewBox="0 0 11 11"><circle cx="5.500" cy="5.500" r="4" fill="none" stroke="#fff" strokeWidth="1.500" /></svg></TaskItem>
          <TaskItem aria-label="タスク ビュー"><svg width="12" height="11" viewBox="0 0 12 11" fill="none" stroke="#ddd"><path d="M1 3.500h6v4H1zM1 0v1.500h6V0M1 11V9.500h6V11M9.500 0v3M9.500 5v6" /></svg></TaskItem>
          <TaskItem aria-label="エクスプローラー"><svg width="14" height="12" viewBox="0 0 14 12"><path d="M0 1h5l1 1h8v9H0z" fill="#f3cf72" /><path d="M3 6h8v6H9V9H5v3H3z" fill="#45a6d8" /></svg></TaskItem>
          <TaskItem $open aria-label="録画"><svg width="15" height="15" viewBox="0 0 15 15"><circle cx="7.500" cy="7.500" r="7.200" fill="#fff200" /></svg></TaskItem>
          <TaskItem $open aria-label="OBS"><svg width="15" height="15" viewBox="0 0 15 15" fill="none" stroke="#ddd"><circle cx="7.500" cy="7.500" r="6.500" /><path d="M7 2q-2 3 1 5 4-1 4 3M8 7q-1 4-5 3M8 7 5 5" strokeWidth="1.500" /></svg></TaskItem>
          <TaskItem $open $front aria-label="Revit"><svg width="15" height="15" viewBox="0 0 15 15"><rect width="15" height="15" fill="#dcebf8" /><path d="M3 2h6l3 2-1 4-2 1 3 4H9L7 9H6v4H3zM6 4v3h2l1-1.500L8 4z" fill="#1e5ea8" /></svg></TaskItem>
          <Tray>
            <svg width="9" height="6" viewBox="0 0 9 6" fill="none" stroke="#eee"><path d="m1 5 3.500-4L8 5" /></svg>
            <svg width="12" height="10" viewBox="0 0 12 10" fill="#eee"><path d="m3 0 3 2-3 2-3-2zM9 0l3 2-3 2-3-2zM3 4l3 2-3 2-3-2zM9 4l3 2-3 2-3-2zM6 7l2 1.500L6 10 4 8.500z" /></svg>
            <svg width="15" height="9" viewBox="0 0 15 9" fill="none" stroke="#eee"><path d="M.5.5h14v8H.5zM2 2.500h11M2 4.500h11M4 6.500h7" /></svg>
            <span>A</span>
            <svg width="17" height="16" viewBox="0 0 17 16"><path d="M1 1h11v9H6l-2 2v-2H1z" fill="#eee" /><path d="M3 4h7M3 6.500h5" stroke="#444" /><circle cx="11.500" cy="10.500" r="5" fill="#38474f" stroke="#ddd" /><text x="11.500" y="13" fontSize="7" fill="#fff" textAnchor="middle">13</text></svg>
          </Tray>
        </Taskbar>
      </Window>
      <Banner>部屋を選択する方法（４種類）</Banner>
      <Caption>
        <CaptionLine>③部屋の中でカーソルを移動して、</CaptionLine>
        <CaptionLine $indent>×が出たら左クリック</CaptionLine>
      </Caption>
    </Page>
  );
}
